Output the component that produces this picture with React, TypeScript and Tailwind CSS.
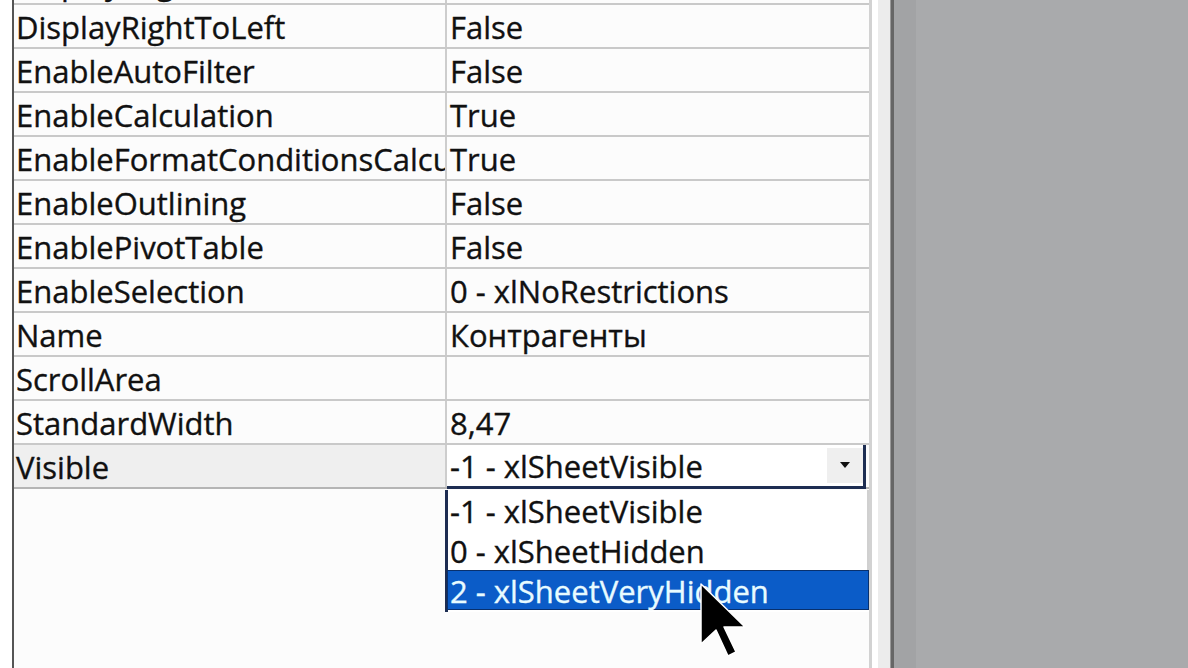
import React from "react";

const rows: [string, string][] = [
  ["DisplayPageBreaks", "False"],
  ["DisplayRightToLeft", "False"],
  ["EnableAutoFilter", "False"],
  ["EnableCalculation", "True"],
  ["EnableFormatConditionsCalculation", "True"],
  ["EnableOutlining", "False"],
  ["EnablePivotTable", "False"],
  ["EnableSelection", "0 - xlNoRestrictions"],
  ["Name", "Контрагенты"],
  ["ScrollArea", ""],
  ["StandardWidth", "8,47"],
];

function Row({ name, value }: { name: string; value: string }) {
  return (
    <div className="grid grid-cols-[433px_1fr] h-[44px] border-b-2 border-[#c9c9c9]">
      <div className="border-r-2 border-[#cdcdcd] pl-[2px] pt-[2px] flex items-center overflow-hidden whitespace-nowrap">
        {name}
      </div>
      <div className="pl-[3px] pt-[2px] flex items-center overflow-hidden whitespace-nowrap">{value}</div>
    </div>
  );
}

export default function App() {
  return (
    <div
      className="relative w-[1188px] h-[668px] overflow-hidden flex bg-white text-[#111] text-[31px] leading-none [-webkit-text-stroke:0.35px]"
      style={{ fontFamily: '"Open Sans", "Noto Sans", sans-serif' }}
    >
      <div className="w-[12px] bg-white" />
      <div className="w-[2px] bg-[#555]" />
      <div className="w-[855px] flex flex-col -mt-[39px] bg-[#fcfcfc]">
        {rows.map(([n, v]) => (
          <Row key={n} name={n} value={v} />
        ))}
        <div className="grid grid-cols-[433px_1fr] h-[44px] border-b-2 border-[#b5b5b5]">
          <div className="border-r-2 border-[#cdcdcd] pl-[2px] pt-[2px] flex items-center bg-[#efefef]">Visible</div>
          <div className="flex bg-white border-b-[3px] border-r-[3px] border-[#1d2d52] mr-[3px] -mb-[2px]">
            <div className="flex-1 pl-[3px] pt-[2px] flex items-center whitespace-nowrap">-1 - xlSheetVisible</div>
            <div className="w-[36px] my-[3px] bg-[#efefef] flex items-center justify-center">
              <svg width="10" height="7" viewBox="0 0 10 7">
                <path d="M0 0 H10 L5 6 Z" fill="#111" />
              </svg>
            </div>
          </div>
        </div>
        <div className="flex-1" />
      </div>
      <div className="w-[3px] bg-[#d2d2d2]" />
      <div className="w-[6px] bg-white" />
      <div className="w-[12px] bg-[#ececec]" />
      <div className="w-[1px] bg-[#9a9a9a]" />
      <div className="w-[3px] bg-[#666]" />
      <div className="w-[22px] bg-[#a2a3a5]" />
      <div className="flex-1 bg-[#a9aaac]" />

      <div className="absolute left-[445px] top-[490px] w-[424px] h-[122px] bg-white border-l-[3px] border-[#1d2d52] flex flex-col">
        <div className="h-[40px] pl-[2px] pt-[2px] flex items-center whitespace-nowrap border-r-2 border-[#d0d0d0]">-1 - xlSheetVisible</div>
        <div className="h-[40px] pl-[2px] pt-[2px] flex items-center whitespace-nowrap border-r-2 border-[#d0d0d0]">0 - xlSheetHidden</div>
        <div className="h-[40px] pl-[2px] pt-[2px] flex items-center whitespace-nowrap bg-[#0b5cc8] text-[#e8fbff] border border-[#08306e] -ml-[1px]">
          2 - xlSheetVeryHidden
        </div>
      </div>

      <svg className="absolute left-[699px] top-[582px]" width="50" height="80" viewBox="0 0 50 80">
        <path d="M2 2 V62 L17 48 L29 74 L37 70 L25 45 L46 45 Z" fill="#000" stroke="#fff" strokeWidth="1.5" strokeLinejoin="round" />
      </svg>
    </div>
  );
}
